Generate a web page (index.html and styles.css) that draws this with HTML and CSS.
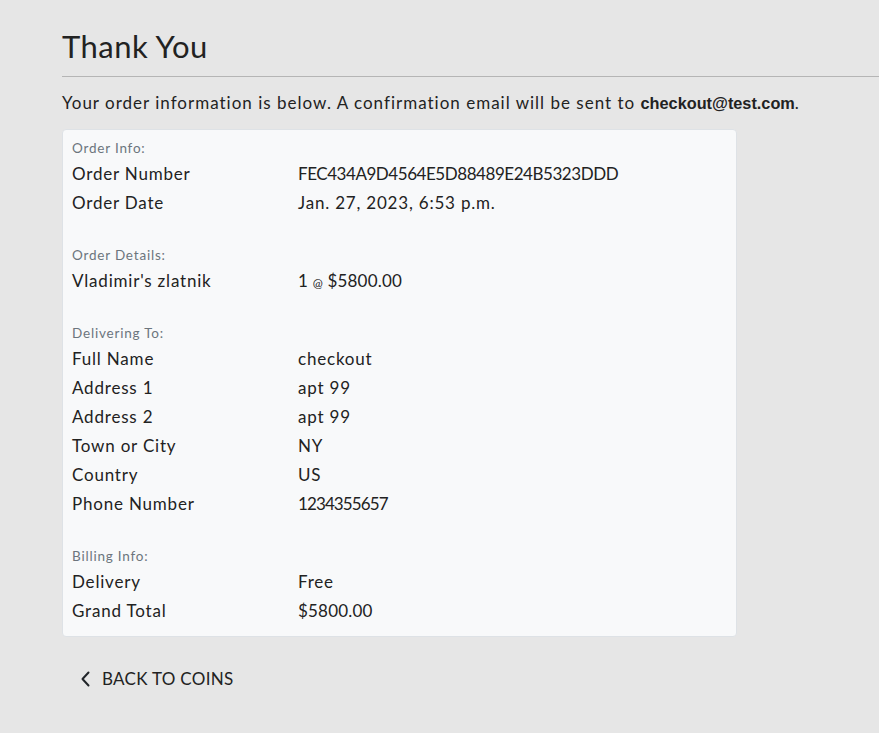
FILE: index.html
```html
<!DOCTYPE html>
<html lang="en">
<head>
<meta charset="utf-8">
<title>Thank You</title>
<link rel="stylesheet" href="styles.css">
</head>
<body>
<main class="page">
  <h1 class="title">Thank You</h1>
  <hr class="rule">
  <p class="lead">Your order information is below. A confirmation email will be sent to <strong class="email">checkout@test.com</strong>.</p>

  <section class="card">
    <div class="group">
      <div class="group-label">Order Info:</div>
      <div class="row"><span class="key">Order Number</span><span class="val tight">FEC434A9D4564E5D88489E24B5323DDD</span></div>
      <div class="row"><span class="key">Order Date</span><span class="val">Jan. 27, 2023, 6:53 p.m.</span></div>
    </div>
    <div class="group">
      <div class="group-label">Order Details:</div>
      <div class="row"><span class="key">Vladimir's zlatnik</span><span class="val num">1 <span class="at">@</span> $5800.00</span></div>
    </div>
    <div class="group">
      <div class="group-label">Delivering To:</div>
      <div class="row"><span class="key">Full Name</span><span class="val">checkout</span></div>
      <div class="row"><span class="key">Address 1</span><span class="val">apt 99</span></div>
      <div class="row"><span class="key">Address 2</span><span class="val">apt 99</span></div>
      <div class="row"><span class="key">Town or City</span><span class="val">NY</span></div>
      <div class="row"><span class="key">Country</span><span class="val">US</span></div>
      <div class="row"><span class="key">Phone Number</span><span class="val tighter">1234355657</span></div>
    </div>
    <div class="group">
      <div class="group-label">Billing Info:</div>
      <div class="row"><span class="key">Delivery</span><span class="val">Free</span></div>
      <div class="row"><span class="key">Grand Total</span><span class="val num">$5800.00</span></div>
    </div>
  </section>

  <a class="back" href="#">
    <svg class="chev" width="12" height="16" viewBox="0 0 12 16" aria-hidden="true"><path d="M8.5 1.5 L2.5 8 L8.5 14.5" fill="none" stroke="#212529" stroke-width="2" stroke-linecap="round" stroke-linejoin="round"/></svg>
    <span>BACK TO COINS</span>
  </a>
</main>
</body>
</html>
```

FILE: styles.css
```css
html, body {
  margin: 0;
  padding: 0;
}
body {
  background: #e6e6e6;
  font-family: "Lato", "Noto Sans", sans-serif;
  color: #222;
  height: 733px;
  overflow: hidden;
}
.page {
  padding: 24px 0 0 62px;
}
.title {
  margin: 0;
  font-weight: 400;
  font-size: 31px;
  line-height: 44px;
  letter-spacing: 0.5px;
}
.rule {
  margin: 8px 0 0 0;
  border: 0;
  border-top: 1px solid #b5b5b5;
}
.lead {
  margin: 14px 0 0 0;
  font-size: 17px;
  line-height: 24px;
  letter-spacing: 1px;
}
.email {
  font-family: "Liberation Sans", Arial, sans-serif;
  font-weight: 700;
  font-size: 16.3px;
  letter-spacing: 0;
}
.card {
  margin-top: 14px;
  width: 656px;
  background: #f8f9fa;
  border: 1px solid #dee2e6;
  border-radius: 4px;
  padding: 7px 8px 11px 9px;
}
.group + .group {
  margin-top: 27px;
}
.group-label {
  font-size: 13.5px;
  line-height: 22px;
  color: #6c757d;
  letter-spacing: 0.8px;
}
.row {
  display: grid;
  grid-template-columns: 226px 1fr;
  font-size: 17px;
  line-height: 29px;
  letter-spacing: 0.8px;
}
.tight {
  letter-spacing: -0.45px;
}
.tighter {
  letter-spacing: -0.9px;
}
.num {
  letter-spacing: 0.2px;
}
.at {
  font-size: 12px;
  line-height: 0;
}
.back {
  display: flex;
  align-items: center;
  gap: 10px;
  margin: 30px 0 0 18px;
  color: #222;
  text-decoration: none;
  font-size: 17px;
  line-height: 24px;
  letter-spacing: 0.3px;
}
.chev {
  display: block;
}
```
